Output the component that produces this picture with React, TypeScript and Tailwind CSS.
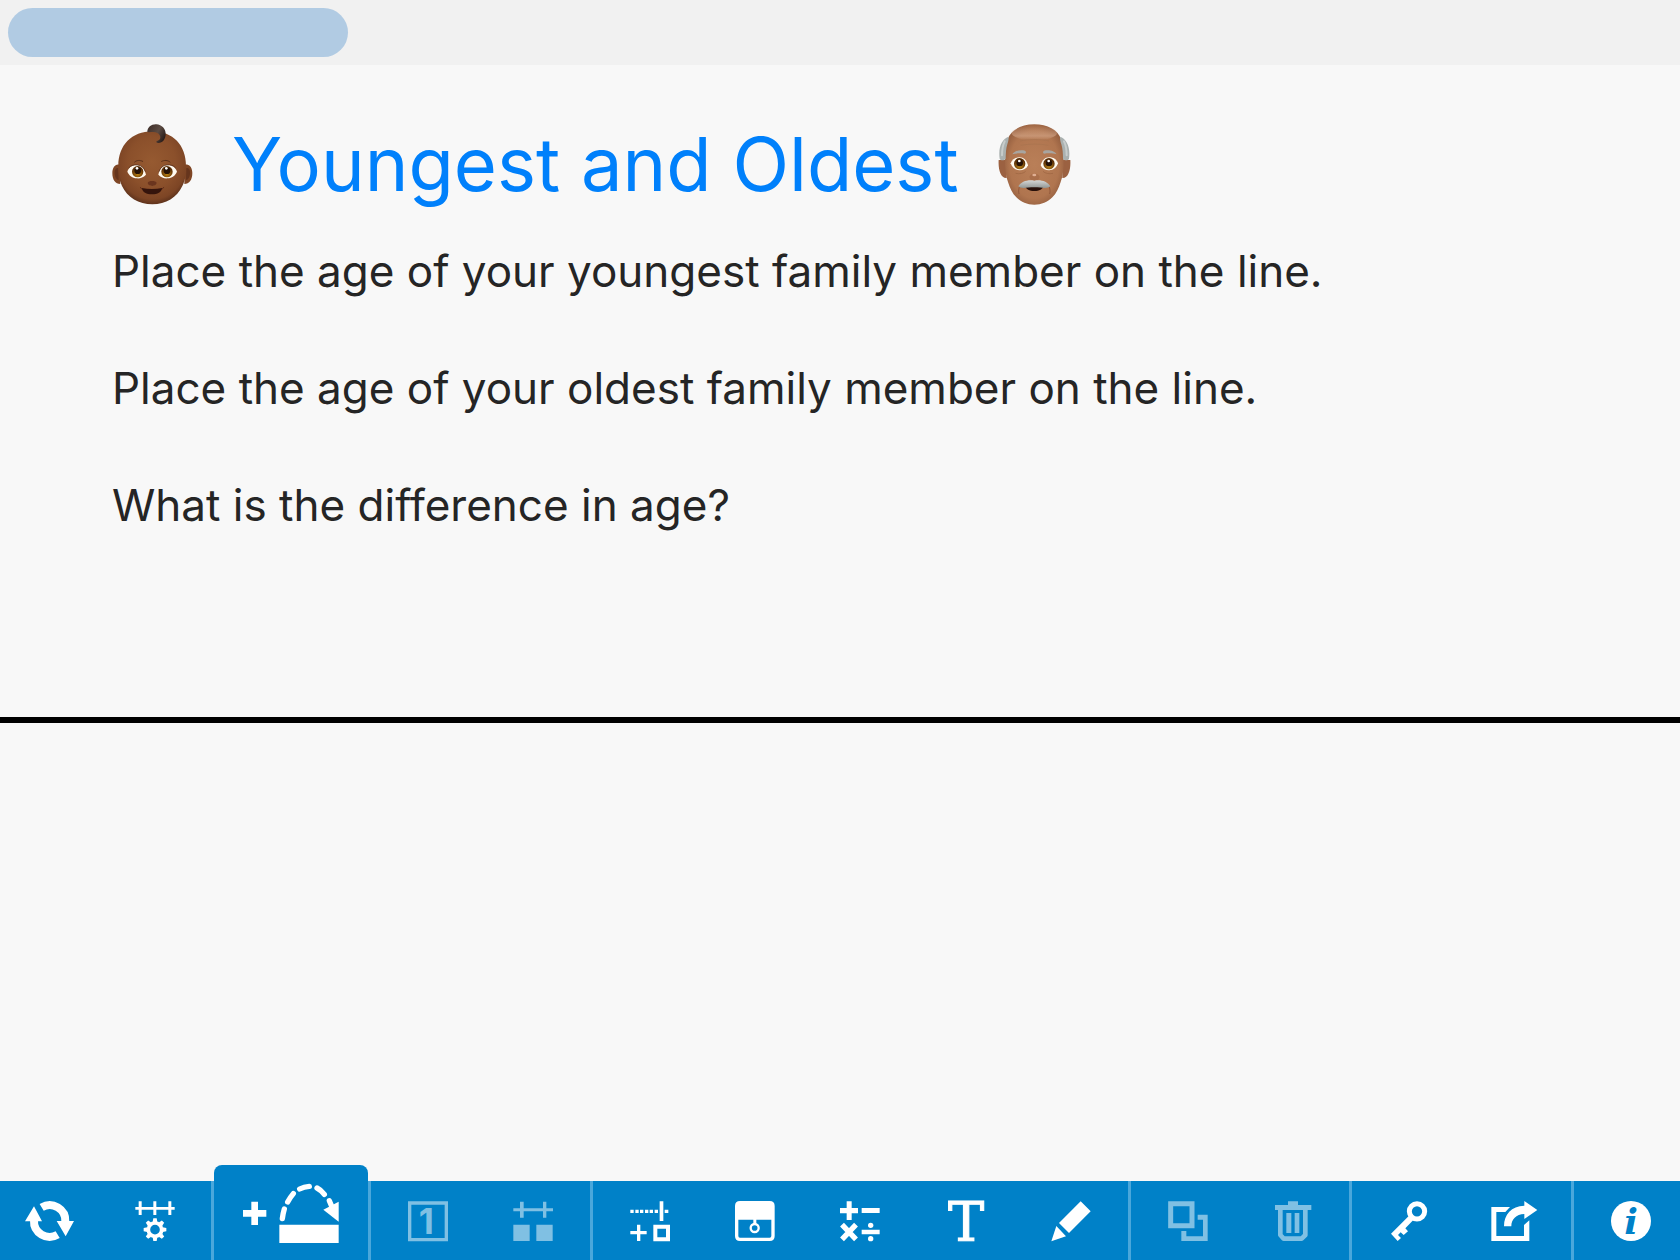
import type { ReactNode } from "react";

const gearAngles = [0, 45, 90, 135, 180, 225, 270, 315];

function BabyFace() {
  return (
    <svg role="img" aria-label="Baby" viewBox="37 40 243 243" className="size-[81px] shrink-0">
      <defs>
        <radialGradient id="baby-skin" cx="0.5" cy="0.42" r="0.58">
          <stop offset="0" stopColor="#965a31" />
          <stop offset="0.6" stopColor="#8b502b" />
          <stop offset="0.88" stopColor="#7d4525" />
          <stop offset="1" stopColor="#5f331c" />
        </radialGradient>
        <linearGradient id="baby-hair" x1="0" y1="0" x2="1" y2="0.6">
          <stop offset="0" stopColor="#3a2b26" />
          <stop offset="0.6" stopColor="#5b4a42" />
          <stop offset="1" stopColor="#2c1f1b" />
        </linearGradient>
        <radialGradient id="baby-iris" cx="0.5" cy="0.7" r="0.55">
          <stop offset="0" stopColor="#bd8412" />
          <stop offset="1" stopColor="#5a2e06" />
        </radialGradient>
      </defs>
      <path d="M60 162c-13-4-22 8-22 25 0 20 9 33 24 33zM256 162c13-4 22 8 22 25 0 20-9 33-24 33z" fill="#7f4625" />
      <path d="M56 172c-9-1-12 7-11 18 1 10 5 17 12 18zM260 172c9-1 12 7 11 18-1 10-5 17-12 18z" fill="#66351d" />
      <path d="M158 62c62 0 101 42 101 104 0 20-1 42-11 60-16 34-49 55-90 55s-75-21-91-55c-9-18-11-40-11-60 0-62 40-104 102-104z" fill="url(#baby-skin)" />
      <path d="M143 64c0-15 13-24 27-23 17 1 28 14 28 29s-9 27-22 27c-5 0-7-3-5-6 9-2 13-8 10-16-3-8-11-10-20-11-7 0-14 1-18 0z" fill="url(#baby-hair)" />
      <path d="M105 154c6-6 16-6 24-2M186 152c8-4 18-4 25 2" fill="none" stroke="#57301c" strokeWidth="3" strokeLinecap="round" />
      <path d="M83 183c5-15 17-21 30-20 14 1 22 12 26 29-9 9-18 12-28 11-13-1-22-7-28-20z" fill="#fffaf0" />
      <path d="M232 183c-5-15-17-21-30-20-14 1-22 12-26 29 9 9 18 12 28 11 13-1 22-7 28-20z" fill="#fffaf0" />
      <circle cx="114" cy="183" r="17" fill="url(#baby-iris)" />
      <circle cx="202" cy="183" r="17" fill="url(#baby-iris)" />
      <circle cx="114" cy="180" r="10" fill="#261105" />
      <circle cx="202" cy="180" r="10" fill="#261105" />
      <circle cx="112" cy="173" r="4" fill="#fff" />
      <circle cx="200" cy="173" r="4" fill="#fff" />
      <path d="M87 172c7-8 16-10 26-9 12 1 20 8 24 20M228 172c-7-8-16-10-26-9-12 1-20 8-24 20" fill="none" stroke="#482313" strokeWidth="2" />
      <path d="M144 217c2-8 25-8 27 0-2 8-9 7-13 9-5-2-12-1-14-9z" fill="#6b351e" />
      <path d="M126 232c20 4 42 4 62 0-3 13-14 19-31 19s-28-6-31-19z" fill="#35140c" />
      <path d="M122 230c2 1 3 3 4 5M192 230c-2 1-3 3-4 5" stroke="#642f1b" strokeWidth="3" strokeLinecap="round" />
    </svg>
  );
}

function OldManFace() {
  return (
    <svg role="img" aria-label="Older man" viewBox="54 40 219 243" className="h-[81px] w-[73px] shrink-0">
      <defs>
        <radialGradient id="man-skin" cx="0.5" cy="0.5" r="0.6">
          <stop offset="0" stopColor="#b97f58" />
          <stop offset="0.7" stopColor="#b0754f" />
          <stop offset="1" stopColor="#8b573a" />
        </radialGradient>
        <linearGradient id="man-shine" x1="0" y1="0" x2="0" y2="1">
          <stop offset="0" stopColor="#d5a98c" stopOpacity="0" />
          <stop offset="0.7" stopColor="#d5a98c" stopOpacity="0.6" />
          <stop offset="1" stopColor="#d5a98c" stopOpacity="0" />
        </linearGradient>
        <linearGradient id="man-mustache" x1="0" y1="0" x2="0" y2="1">
          <stop offset="0" stopColor="#d5d7d6" />
          <stop offset="1" stopColor="#929795" />
        </linearGradient>
        <radialGradient id="man-iris" cx="0.5" cy="0.7" r="0.55">
          <stop offset="0" stopColor="#c08a1c" />
          <stop offset="1" stopColor="#5a2e06" />
        </radialGradient>
      </defs>
      <path d="M56 148h24v54c-17 2-26-24-24-54zM271 148h-24v54c17 2 26-24 24-54z" fill="#9b6141" />
      <path d="M163 41c40 0 70 17 80 44 6 17 8 38 8 62 0 25-2 49-9 67-6 19-13 34-25 46-15 15-32 22-54 22s-39-7-54-22c-12-12-19-27-25-46-7-18-9-42-9-67 0-24 2-45 8-62 10-27 40-44 80-44z" fill="url(#man-skin)" />
      <path d="M85 78c-19 7-31 32-26 66 3 6 12 7 18 1 0-16 1-31 5-44 3-9 5-17 3-23zM241 78c19 7 31 32 26 66-3 6-12 7-18 1 0-16-1-31-5-44-3-9-5-17-3-23z" fill="#aab1b0" />
      <path d="M74 92c-6 12-8 28-8 42M252 92c6 12 8 28 8 42" fill="none" stroke="#c8cdcc" strokeWidth="6" strokeLinecap="round" />
      <ellipse cx="163" cy="67" rx="68" ry="22" fill="url(#man-shine)" />
      <path d="M120 91c28-6 62-6 87 0M122 104c28-5 56-5 83 0" fill="none" stroke="#a8724f" strokeWidth="2" />
      <path d="M97 131c6-11 25-15 38-11 4 3 4 7 0 9-14-2-28-1-38 2zM230 131c-6-11-25-15-38-11-4 3-4 7 0 9 14-2 28-1 38 2z" fill="#a8a5a0" />
      <path d="M92 158c4-12 14-18 26-18 14 0 22 9 26 24-4 10-14 15-25 15-14 0-23-9-27-21z" fill="#fffaf0" />
      <path d="M234 158c-4-12-14-18-26-18-14 0-22 9-26 24 4 10 14 15 25 15 14 0 23-9 27-21z" fill="#fffaf0" />
      <circle cx="119" cy="159" r="17" fill="url(#man-iris)" />
      <circle cx="207" cy="159" r="17" fill="url(#man-iris)" />
      <circle cx="119" cy="157" r="10" fill="#241005" />
      <circle cx="207" cy="157" r="10" fill="#241005" />
      <circle cx="118" cy="151" r="4" fill="#fff" />
      <circle cx="206" cy="151" r="4" fill="#fff" />
      <path d="M107 188c12 3 24 0 30-6M219 188c-12 3-24 0-30-6" fill="none" stroke="#9b6341" strokeWidth="2" />
      <path d="M148 198c4-8 8-9 15-9s12 1 16 9c-2 10-8 12-16 12s-13-2-15-12z" fill="#a96e4a" />
      <ellipse cx="163" cy="193" rx="6" ry="4" fill="#e0af93" />
      <path d="M119 226c-3 8-4 16-2 24M207 226c3 8 4 16 2 24" fill="none" stroke="#93593b" strokeWidth="3" />
      <path d="M136 226h54c-2 10-12 15-27 15s-25-5-27-15z" fill="#28100a" />
      <path d="M163 210c18-4 40 2 48 17-9 9-26 3-48 3s-39 6-48-3c8-15 30-21 48-17z" fill="url(#man-mustache)" />
    </svg>
  );
}

function ToolButton({ label, disabled = false, children }: { label: string; disabled?: boolean; children: ReactNode }) {
  return (
    <button
      type="button"
      aria-label={label}
      disabled={disabled}
      className="flex h-full min-w-0 items-center justify-center text-white disabled:text-[#80c0e3]"
    >
      {children}
    </button>
  );
}

function Glyph({ box, children }: { box: string; children: ReactNode }) {
  return (
    <svg viewBox={box} aria-hidden="true" className="h-10 w-auto overflow-visible" fill="currentColor">
      {children}
    </svg>
  );
}

function Divider() {
  return <div className="h-full bg-[#4aa7db]" />;
}

export default function App() {
  return (
    <div className="flex min-h-screen flex-col bg-[#f8f8f8] font-['Inter',sans-serif]">
      <header className="bg-[#f1f1f1] p-2">
        <div className="h-[49px] w-[340px] rounded-full bg-[#b1cbe3]" />
      </header>

      <main className="flex grow flex-col">
        <section className="flex h-[658px] flex-col border-b-[6px] border-black px-28 pt-[51px]">
          <h1 className="flex items-center gap-[39px] text-[74px] leading-[96px] text-[#0080fb]">
            <BabyFace />
            <span>Youngest and Oldest</span>
            <OldManFace />
          </h1>
          <div className="mt-[29px] flex flex-col gap-[57px] text-[44px] leading-[60px] text-[#252525]">
            <p>Place the age of your youngest family member on the line.</p>
            <p>Place the age of your oldest family member on the line.</p>
            <p>What is the difference in age?</p>
          </div>
        </section>
      </main>

      <nav
        aria-label="Tools"
        className="grid grid-cols-[211fr_3px_154px_3px_219fr_3px_535fr_3px_218fr_3px_219fr_3px_106fr] grid-rows-[79px] items-end bg-[#0081c8]"
      >
        <div className="grid h-full grid-cols-[98fr_113fr]">
          <ToolButton label="Reset">
            <Glyph box="73 150 147 120">
              <path d="M123 169A47 47 0 0 1 194 212M171 251A47 47 0 0 1 100 208" fill="none" stroke="currentColor" strokeWidth="24" />
              <path d="M168 210h52l-25 46zM73 211h51l-24-45z" />
            </Glyph>
          </ToolButton>
          <ToolButton label="Number line settings">
            <Glyph box="404 150 120 120">
              <path d="M405 168h118v8H405zM415 151h9v41h-9zM459 151h9v41h-9zM504 151h9v41h-9z" />
              <circle cx="464" cy="236" r="20" fill="none" stroke="currentColor" strokeWidth="11" />
              {gearAngles.map((angle) => (
                <path key={angle} d="M457 213l2-11h10l2 11z" transform={`rotate(${angle} 464 236)`} />
              ))}
            </Glyph>
          </ToolButton>
        </div>

        <Divider />
        <button type="button" aria-label="Add jump" className="flex h-[95px] items-center justify-center rounded-t-lg bg-[#0081c8] text-white">
          <svg viewBox="129 100 288 180" aria-hidden="true" className="h-[60px] w-24 overflow-visible" fill="currentColor">
            <path d="M154 156h20v25h25v20h-25v25h-20v-25h-25v-20h25zM238 225h178v55H238z" />
            <path d="M247 207Q249 191 253 178M263 157Q270 144 280 132M299 118Q312 111 328 110M351 115Q363 121 373 134M388 153L396 172" fill="none" stroke="currentColor" strokeWidth="16" strokeLinecap="round" />
            <path d="M370 180l46-24v60z" />
          </svg>
        </button>
        <Divider />

        <div className="grid h-full grid-cols-2 px-1">
          <ToolButton label="Number label" disabled>
            <Glyph box="84 150 120 120">
              <path d="M89 156h110v110H89z" fill="none" stroke="currentColor" strokeWidth="10" />
              <text x="139" y="250" fontSize="105" fontWeight="700" textAnchor="middle">1</text>
            </Glyph>
          </ToolButton>
          <ToolButton label="Split number line" disabled>
            <Glyph box="401 150 120 120">
              <path d="M402 172h119v9H402zM422 152h11v48h-11zM491 152h10v48h-10zM402 221h49v49h-49zM471 221h49v49h-49z" />
            </Glyph>
          </ToolButton>
        </div>

        <Divider />
        <div className="grid h-full grid-cols-5 px-1">
          <ToolButton label="Add tick or box">
            <Glyph box="118 150 120 120">
              <path d="M119 176h10v10h-10zM134 176h10v10h-10zM148 176h10v10h-10zM163 176h10v10h-10zM177 176h10v10h-10zM192 176h10v10h-10zM207 151h11v59h-11zM222 176h11v10h-11zM139 221h10v19h19v10h-19v20h-10v-20h-20v-10h20z" />
              <path d="M194 227h38v38h-38z" fill="none" stroke="currentColor" strokeWidth="12" />
            </Glyph>
          </ToolButton>
          <ToolButton label="Cover">
            <Glyph box="436 150 120 120">
              <path d="M441 165q0-10 10-10h89q10 0 10 10v90q0 10-10 10h-89q-10 0-10-10z" fill="none" stroke="currentColor" strokeWidth="10" />
              <path d="M441 206v-41q0-10 10-10h89q10 0 10 10v41zM491 206h9v14h-9z" />
              <circle cx="495" cy="231" r="12" fill="none" stroke="currentColor" strokeWidth="7" />
            </Glyph>
          </ToolButton>
          <ToolButton label="Math symbols">
            <Glyph box="751 150 120 120">
              <path d="M771 151h15v20h19v16h-19v20h-15v-20h-20v-16h20zM816 171h54v15h-54zM816 236h54v14h-54z" />
              <path d="M757 221l42 44M799 221l-42 44" stroke="currentColor" strokeWidth="16" />
              <circle cx="843" cy="223" r="8" />
              <circle cx="843" cy="263" r="8" />
            </Glyph>
          </ToolButton>
          <ToolButton label="Text">
            <Glyph box="138 150 120 120">
              <text x="198" y="270" fontSize="163" fontFamily="DejaVu Serif, serif" textAnchor="middle" stroke="currentColor" strokeWidth="3">T</text>
            </Glyph>
          </ToolButton>
          <ToolButton label="Draw">
            <Glyph box="456 150 120 120">
              <path d="M545 151l30 30-65 65-30-30zM472 225l29 31-44 15z" />
            </Glyph>
          </ToolButton>
        </div>

        <Divider />
        <div className="grid h-full grid-cols-2 px-1">
          <ToolButton label="Duplicate" disabled>
            <Glyph box="143 150 120 120">
              <path d="M151 158h64v66h-64z" fill="none" stroke="currentColor" strokeWidth="15" />
              <path d="M232 191h30v79h-79v-30h15v16h50v-50h-16z" />
            </Glyph>
          </ToolButton>
          <ToolButton label="Delete" disabled>
            <Glyph box="460 150 120 120">
              <path d="M505 151h30v11h40v15H466v-15h39zM500 186h15v60h-15zM525 186h14v60h-14z" />
              <path d="M482 175v77l10 11h54l11-11v-77" fill="none" stroke="currentColor" strokeWidth="14" strokeLinejoin="round" />
            </Glyph>
          </ToolButton>
        </div>

        <Divider />
        <div className="grid h-full grid-cols-2 px-1">
          <ToolButton label="Lock">
            <Glyph box="87 150 120 120">
              <circle cx="171" cy="181" r="23" fill="none" stroke="currentColor" strokeWidth="15" />
              <path d="M147 194l-54 54 20 22 10-9-9-9 8-8 9 8 13-11-8-9 24-25z" />
            </Glyph>
          </ToolButton>
          <ToolButton label="Share">
            <Glyph box="395 150 140 120">
              <path d="M396 168h56l-14 15h-27v72h83v-33l16-14v62H396z" />
              <path d="M434 226C434 190 456 165 495 164V150L534 177L495 204V189C470 190 456 205 456 226z" />
            </Glyph>
          </ToolButton>
        </div>

        <Divider />
        <div className="grid h-full pl-2">
          <ToolButton label="Information">
            <Glyph box="751 150 120 120">
              <circle cx="811" cy="210" r="60" />
              <text x="811" y="249" fontSize="108" fontWeight="700" fontStyle="italic" fontFamily="DejaVu Serif, serif" textAnchor="middle" fill="#0081c8">i</text>
            </Glyph>
          </ToolButton>
        </div>
      </nav>
    </div>
  );
}
